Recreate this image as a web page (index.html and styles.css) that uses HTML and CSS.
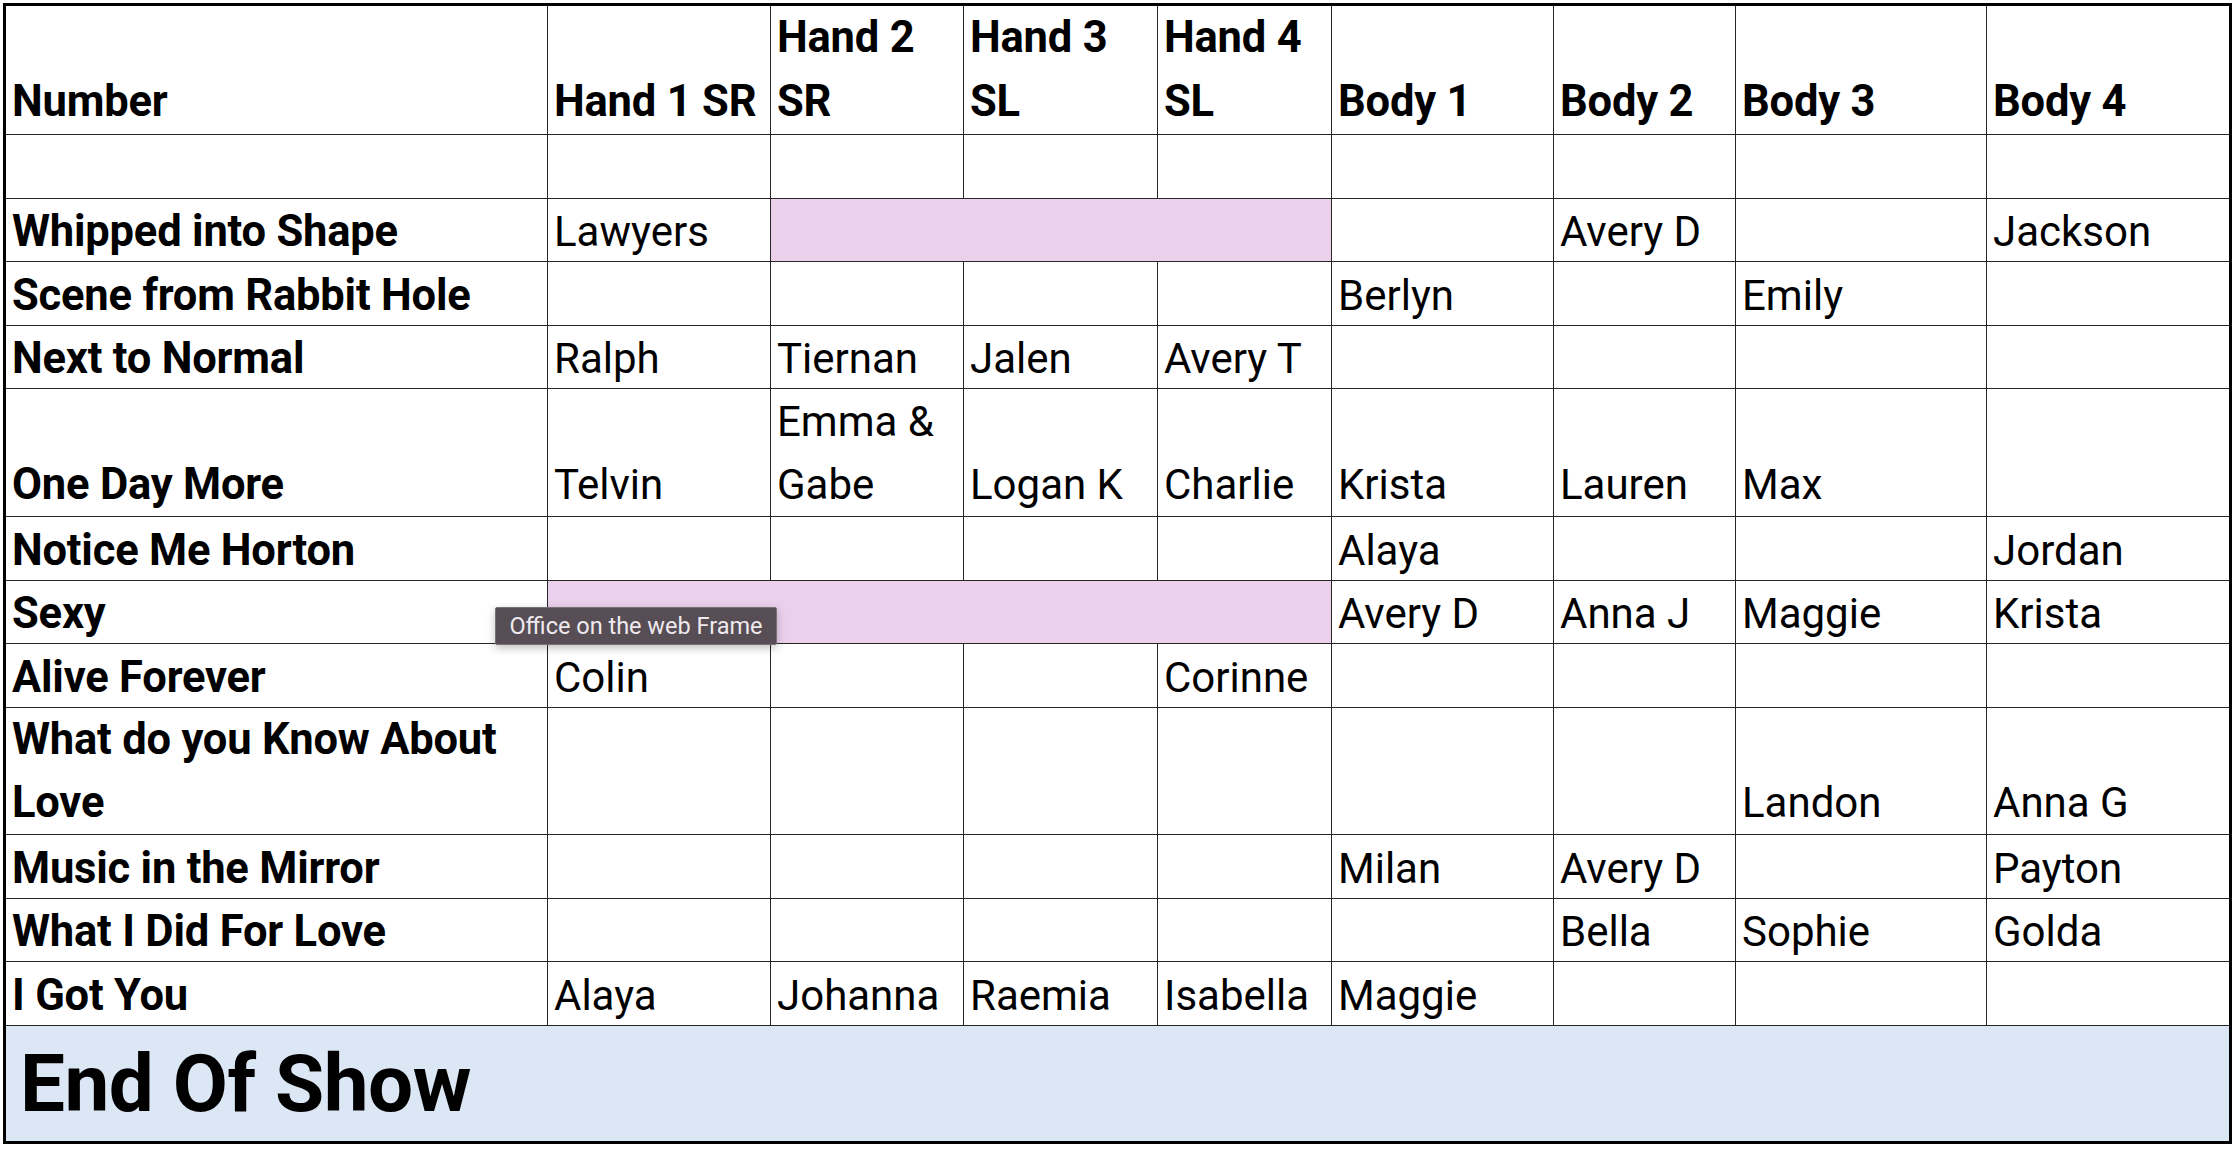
FILE: index.html
```html
<!DOCTYPE html>
<html>
<head>
<meta charset="utf-8">
<link rel="stylesheet" href="styles.css">
</head>
<body>
<div class="sheet">
<table class="grid">
<colgroup>
<col class="c-num"><col class="c-h1"><col class="c-h2"><col class="c-h3"><col class="c-h4"><col class="c-b1"><col class="c-b2"><col class="c-b3"><col class="c-b4">
</colgroup>
<tr class="head">
<th>Number</th><th>Hand 1 SR</th><th class="gl">Hand 2<br>SR</th><th class="gl">Hand 3<br>SL</th><th class="gl">Hand 4<br>SL</th><th>Body 1</th><th>Body 2</th><th class="gl">Body 3</th><th>Body 4</th>
</tr>
<tr class="row"><td class="song"></td><td></td><td></td><td class="gl"></td><td></td><td></td><td></td><td class="gl"></td><td></td></tr>
<tr class="row short"><td class="song">Whipped into Shape</td><td>Lawyers</td><td class="pink gl" colspan="3"></td><td></td><td>Avery D</td><td class="gl"></td><td>Jackson</td></tr>
<tr class="row"><td class="song">Scene from Rabbit Hole</td><td></td><td></td><td class="gl"></td><td></td><td>Berlyn</td><td></td><td class="gl">Emily</td><td></td></tr>
<tr class="row short"><td class="song">Next to Normal</td><td>Ralph</td><td>Tiernan</td><td class="gl">Jalen</td><td>Avery T</td><td></td><td></td><td class="gl"></td><td></td></tr>
<tr class="row double"><td class="song">One Day More</td><td>Telvin</td><td>Emma &amp;<br>Gabe</td><td class="gl">Logan K</td><td>Charlie</td><td>Krista</td><td>Lauren</td><td class="gl">Max</td><td></td></tr>
<tr class="row"><td class="song">Notice Me Horton</td><td></td><td></td><td class="gl"></td><td></td><td>Alaya</td><td></td><td class="gl"></td><td>Jordan</td></tr>
<tr class="row short"><td class="song">Sexy</td><td class="pink" colspan="4"></td><td>Avery D</td><td>Anna J</td><td class="gl">Maggie</td><td>Krista</td></tr>
<tr class="row"><td class="song">Alive Forever</td><td>Colin</td><td></td><td class="gl"></td><td>Corinne</td><td></td><td></td><td class="gl"></td><td></td></tr>
<tr class="row double short"><td class="song">What do you Know About<br>Love</td><td></td><td></td><td class="gl"></td><td></td><td></td><td></td><td class="gl">Landon</td><td>Anna G</td></tr>
<tr class="row"><td class="song">Music in the Mirror</td><td></td><td></td><td class="gl"></td><td></td><td>Milan</td><td>Avery D</td><td class="gl"></td><td>Payton</td></tr>
<tr class="row short"><td class="song">What I Did For Love</td><td></td><td></td><td class="gl"></td><td></td><td></td><td>Bella</td><td class="gl">Sophie</td><td>Golda</td></tr>
<tr class="row"><td class="song">I Got You</td><td>Alaya</td><td>Johanna</td><td class="gl">Raemia</td><td>Isabella</td><td>Maggie</td><td></td><td class="gl"></td><td></td></tr>
<tr class="end"><td colspan="9">End Of Show</td></tr>
</table>
<div class="tooltip">Office on the web Frame</div>
</div>
</body>
</html>
```
FILE: styles.css
```css
html, body {
  margin: 0;
  padding: 0;
  background: #ffffff;
}
body {
  font-family: Roboto, "Liberation Sans", sans-serif;
  color: #000;
}
.sheet {
  position: relative;
  padding: 3px 0 0 3px;
  width: 2236px;
  height: 1150px;
  box-sizing: border-box;
  overflow: hidden;
}
.grid {
  border-collapse: collapse;
  table-layout: fixed;
  width: 2229px;
  border: 3px solid #000;
}
.c-num { width: 543px; }
.c-h1 { width: 223px; }
.c-h2 { width: 193px; }
.c-h3 { width: 194px; }
.c-h4 { width: 174px; }
.c-b1 { width: 222px; }
.c-b2 { width: 182px; }
.c-b3 { width: 251px; }
.c-b4 { width: 244px; }

.grid th, .grid td {
  border: 1px solid #262626;
  padding: 0 6px;
  text-align: left;
  vertical-align: bottom;
  font-size: 42px;
  line-height: 58px;
  white-space: nowrap;
  overflow: hidden;
}
.grid th {
  font-weight: 700;
  font-size: 43.5px;
  line-height: 64px;
  height: 127px;
  letter-spacing: -0.2px;
}
.grid td { font-weight: 400; }
.grid td.song { font-weight: 700; font-size: 43.5px; letter-spacing: -0.2px; }
.row td { height: 63px; }
.row.short td { height: 62px; }
.row.double td { height: 127px; line-height: 63px; }
.row.double.short td { height: 126px; }
.grid .gl { border-left-color: #7f7f7f; }
.grid td.pink { background: #ebd0ec; }
.end td {
  background: #dce7f5;
  font-weight: 700;
  font-size: 80px;
  line-height: 90px;
  height: 115px;
  vertical-align: middle;
  padding-left: 14px;
  letter-spacing: -0.5px;
}
.tooltip {
  position: absolute;
  left: 495px;
  top: 607px;
  width: 282px;
  height: 38px;
  box-sizing: border-box;
  background: #574d55;
  border: 1px solid #7a7077;
  border-radius: 2px;
  color: #efeaee;
  font-family: Roboto, "Liberation Sans", sans-serif;
  font-size: 23.5px;
  line-height: 36px;
  text-align: center;
  box-shadow: 0 3px 8px rgba(0,0,0,0.25);
}
```
